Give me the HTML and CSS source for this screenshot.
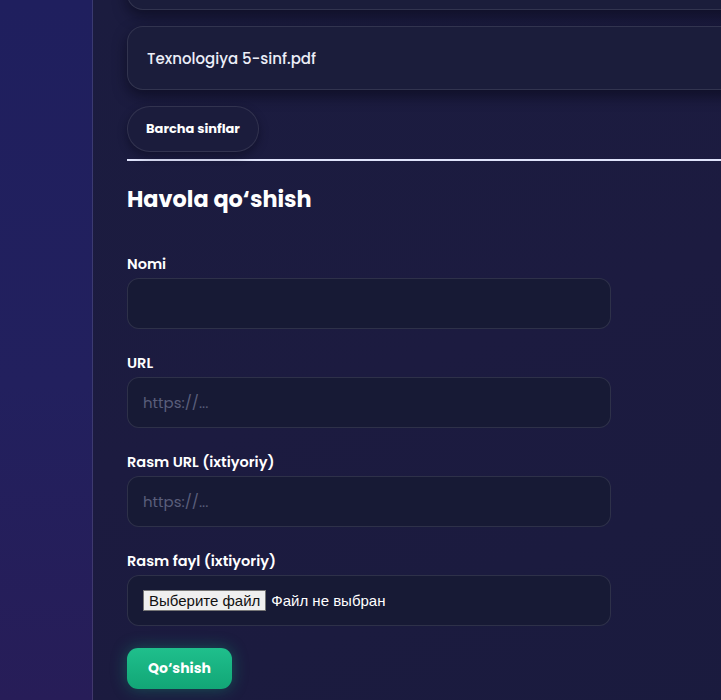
FILE: index.html
```html
<!DOCTYPE html>
<html lang="uz">
<head>
    <meta charset="UTF-8">
    <meta name="viewport" content="width=device-width, initial-scale=1.0">
    <title>Materiallar</title>
    <link rel="stylesheet" href="styles.css">
</head>
<body>
    <div class="layout">
        <aside class="sidebar"></aside>

        <main class="content">
            <div class="file-list">
                <div class="file-card file-card-prev"><span>Matematika 5-sinf.pdf</span></div>
                <div class="file-card"><span>Texnologiya 5-sinf.pdf</span></div>
            </div>

            <button class="pill-btn" type="button">Barcha sinflar</button>

            <hr class="divider">

            <h2>Havola qo‘shish</h2>

            <form class="link-form" id="linkForm">
                <label for="linkName">Nomi</label>
                <input type="text" id="linkName" name="linkName">

                <label for="linkUrl">URL</label>
                <input type="text" id="linkUrl" name="linkUrl" placeholder="https://...">

                <label for="imageUrl">Rasm URL (ixtiyoriy)</label>
                <input type="text" id="imageUrl" name="imageUrl" placeholder="https://...">

                <label for="imageFile">Rasm fayl (ixtiyoriy)</label>
                <div class="file-field">
                    <input type="file" id="imageFile" name="imageFile" accept="image/*">
                    <label for="imageFile" class="file-btn">Выберите файл</label>
                    <span class="file-name">Файл не выбран</span>
                </div>

                <button type="submit" class="submit-btn">Qo‘shish</button>
            </form>
        </main>
    </div>
</body>
</html>
```

FILE: styles.css
```css
body {
    font-family: "Poppins", "Open Sans", sans-serif;
    background: #1c1d40;
    color: #f1f2fb;
    margin: 0;
    overflow: hidden;
}

.layout {
    display: flex;
    min-height: 100vh;
}

.sidebar {
    width: 92px;
    flex-shrink: 0;
    background: linear-gradient(180deg, #1f1f5e 0%, #22205e 55%, #271d58 100%);
    border-right: 1px solid rgba(255, 255, 255, 0.12);
}

.content {
    flex: 1;
    padding: 0 0 0 34px;
    background: linear-gradient(160deg, #1b1c3f 0%, #1c1b40 50%, #1a1b3e 100%);
}

.file-list {
    width: 680px;
    margin-top: -54px;
}

.file-card {
    height: 64px;
    display: flex;
    align-items: center;
    padding-left: 19px;
    margin-bottom: 16px;
    background: #1b1d3b;
    border: 1px solid rgba(255, 255, 255, 0.1);
    border-radius: 16px;
    box-shadow: 0 6px 14px rgba(5, 6, 20, 0.55);
    font-size: 15px;
    font-weight: 500;
    color: #eceef8;
    box-sizing: border-box;
}

.pill-btn {
    height: 46px;
    padding: 0 18px;
    background: #1b1c3c;
    border: 1px solid rgba(255, 255, 255, 0.1);
    border-radius: 23px;
    color: #ffffff;
    font-family: inherit;
    font-size: 13px;
    font-weight: 700;
    box-shadow: 0 4px 10px rgba(5, 6, 20, 0.4);
    cursor: pointer;
}

.divider {
    width: 680px;
    margin: 7px 0 0;
    border: none;
    height: 2px;
    background: #dfe3fb;
}

h2 {
    margin: 21px 0 38px;
    font-size: 22.4px;
    font-weight: 700;
    color: #ffffff;
}

.link-form {
    width: 484px;
    display: flex;
    flex-direction: column;
}

.link-form > label {
    font-size: 14.5px;
    font-weight: 600;
    color: #ffffff;
    margin-bottom: 3px;
}

.link-form input[type="text"],
.file-field {
    height: 51px;
    box-sizing: border-box;
    padding: 0 15px;
    margin-bottom: 24px;
    background: #171a35;
    border: 1px solid rgba(255, 255, 255, 0.1);
    border-radius: 12px;
    color: #ffffff;
    font-family: inherit;
    font-size: 15px;
    outline: none;
}

.link-form input::placeholder {
    color: #5a5e7b;
}

.file-field {
    display: flex;
    align-items: center;
    gap: 5px;
    font-family: "Liberation Sans", Arial, sans-serif;
    font-size: 15px;
}

.file-field input[type="file"] {
    display: none;
}

.file-btn {
    background: #efefef;
    color: #111111;
    border: 1px solid #767676;
    padding: 1px 5px;
    line-height: 17px;
    cursor: pointer;
}

.file-name {
    color: #ffffff;
}

.submit-btn {
    align-self: flex-start;
    margin-top: -2px;
    width: 105px;
    height: 41px;
    background: linear-gradient(180deg, #1fbf8c 0%, #12a676 100%);
    border: none;
    border-radius: 11px;
    color: #ffffff;
    font-family: inherit;
    font-size: 14px;
    font-weight: 700;
    box-shadow: 0 0 16px rgba(18, 190, 130, 0.35);
    cursor: pointer;
}
```
